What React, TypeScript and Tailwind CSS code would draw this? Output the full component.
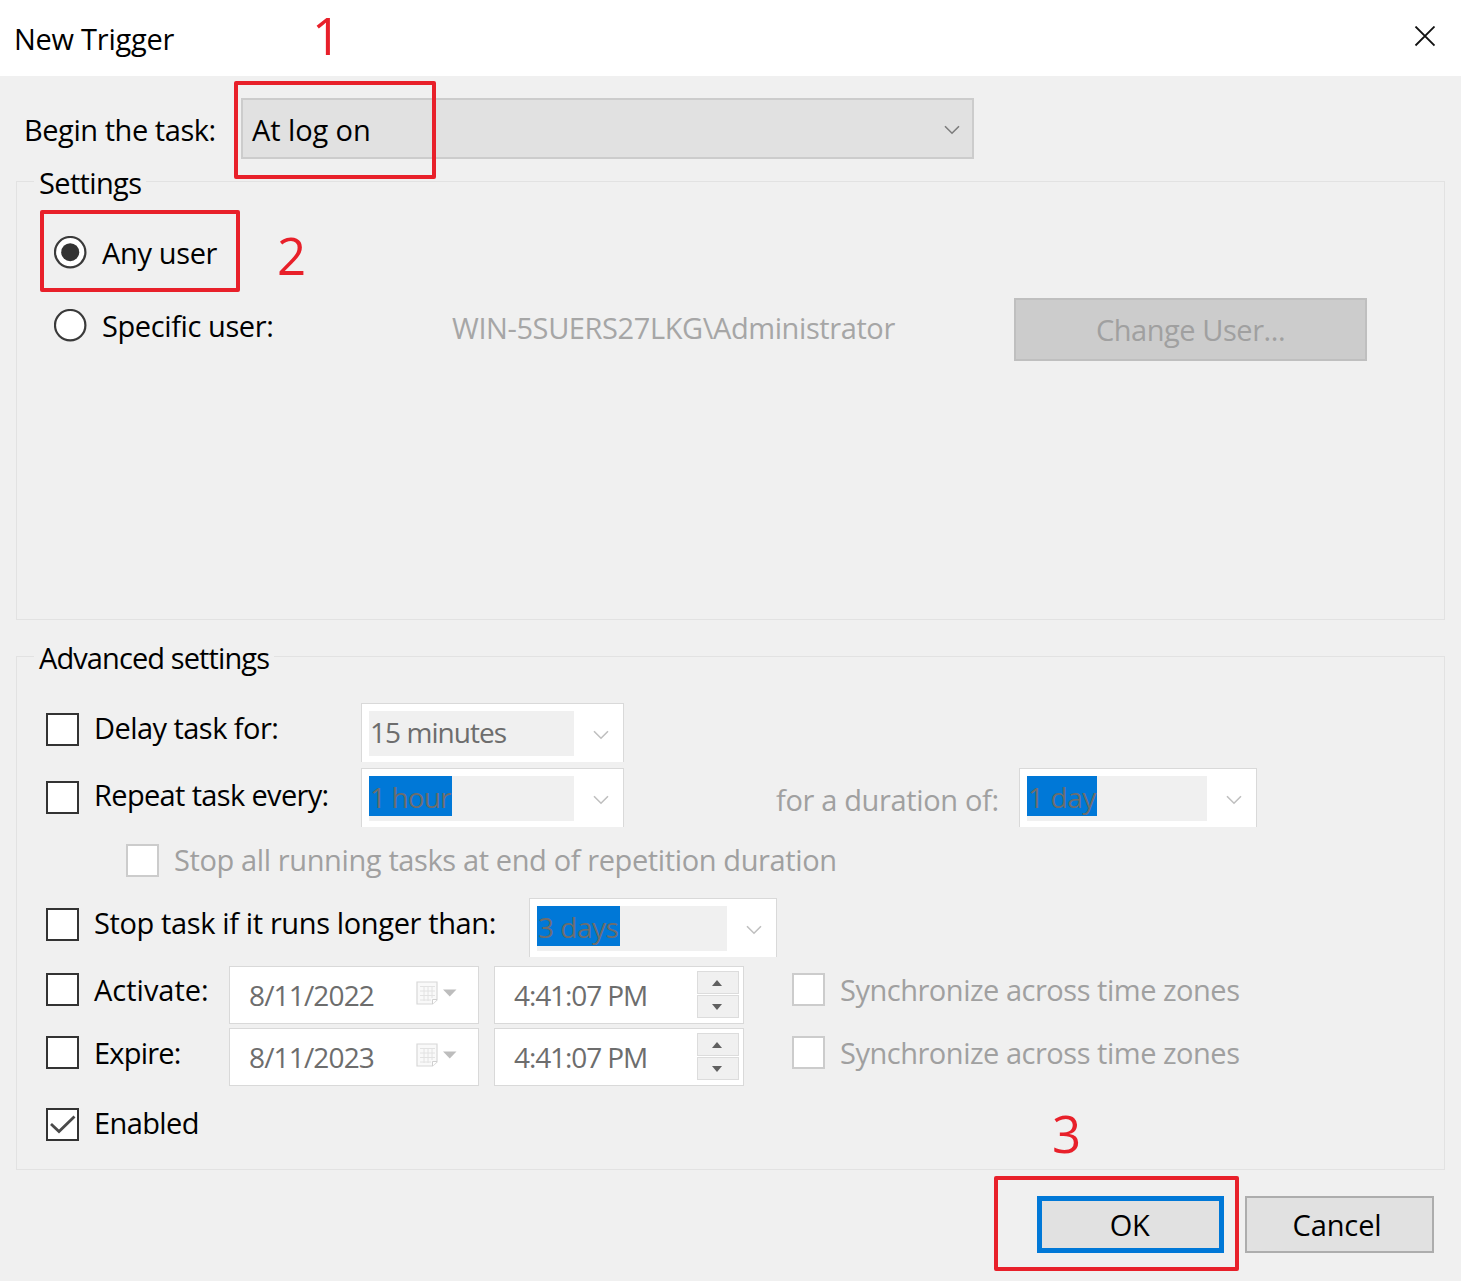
import React from "react";

function Chevron({ className }: { className: string }) {
  return (
    <svg width="16" height="10" viewBox="0 0 16 10" fill="none" stroke="currentColor" strokeWidth="1.6" className={className}>
      <path d="M1 1.2 L8 8.2 L15 1.2" />
    </svg>
  );
}

function Radio({ checked, className }: { checked?: boolean; className?: string }) {
  return (
    <svg width="33" height="33" viewBox="0 0 33 33" className={`shrink-0 ${className || ""}`}>
      <circle cx="16.2" cy="16.2" r="15.2" fill="#fff" stroke="#3a3a3a" strokeWidth="2.2" />
      {checked && <circle cx="16.2" cy="16.2" r="9" fill="#333" />}
    </svg>
  );
}

function Checkbox({ checked, disabled, className }: { checked?: boolean; disabled?: boolean; className?: string }) {
  return (
    <div className={`h-[33px] w-[33px] shrink-0 border-2 bg-white ${disabled ? "border-[#cccccc]" : "border-[#333333]"} ${className || ""}`}>
      {checked && (
        <svg width="29" height="29" viewBox="0 0 29 29" fill="none" stroke="#4a4a4a" strokeWidth="2.8">
          <path d="M3 14 L11 21.5 L26.5 6.5" />
        </svg>
      )}
    </div>
  );
}

function Combo({ value, selected, className, textClass }: { value: string; selected?: string; className: string; textClass: string }) {
  return (
    <div className={`flex h-[59px] shrink-0 border-x border-t border-[#d9d9d9] bg-white pt-[7px] pl-[7px] ${className}`}>
      <div className="h-[45px] flex-1 bg-[#f0f0f0] text-[28px] text-[#6d6d6d]">
        <div className={`h-10 pt-[6px] pl-px ${selected || ""}`}>
          <span className={textClass}>{value}</span>
        </div>
      </div>
      <div className="w-[49px] pt-[19px] pl-[19px]">
        <Chevron className="text-[#bfbfbf]" />
      </div>
    </div>
  );
}

function DateBox({ value }: { value: string }) {
  return (
    <div className="flex h-[58px] w-[250px] shrink-0 border border-[#d9d9d9] bg-white pt-[13px] pl-[19px] text-[#6d6d6d]">
      <span className="w-[167px] text-[28px] tracking-[-0.85px]">{value}</span>
      <svg width="42" height="26" viewBox="0 0 42 26" className="mt-px">
        <path d="M1 1 H21 V19 L16.5 23 H1 Z" fill="#f9f9f9" stroke="#d8d8d8" strokeWidth="1.2" />
        <path d="M4 5.5 H19 M4 10 H19 M4 14.5 H19 M4 19 H15 M8 5 V20 M12 5 V20 M16 5 V17" stroke="#e2e2e2" strokeWidth="1" />
        <path d="M16.5 23 V18.5 H21" fill="#fff" stroke="#cfcfcf" strokeWidth="1" />
        <path d="M27 8.5 H40.5 L33.75 15.5 Z" fill="#bdbdbd" />
      </svg>
    </div>
  );
}

function TimeBox({ value }: { value: string }) {
  return (
    <div className="ml-[15px] flex h-[58px] w-[250px] shrink-0 justify-between border border-[#d9d9d9] bg-white pr-1 pl-[19px] text-[#6d6d6d]">
      <span className="pt-[13px] text-[28px] tracking-[-1.1px]">{value}</span>
      <div className="mt-1 flex flex-col gap-px text-[#606060]">
        <div className="flex h-[23px] w-[42px] items-center justify-center border border-[#dcdcdc] bg-[#f0f0f0] pr-[2px]">
          <svg width="10" height="6" viewBox="0 0 10 6" fill="currentColor">
            <path d="M0 6 L5 0 L10 6 Z" />
          </svg>
        </div>
        <div className="flex h-[23px] w-[42px] items-center justify-center border border-[#dcdcdc] bg-[#f0f0f0] pr-[2px]">
          <svg width="10" height="6" viewBox="0 0 10 6" fill="currentColor">
            <path d="M0 0 L5 6 L10 0 Z" />
          </svg>
        </div>
      </div>
    </div>
  );
}

export default function App() {
  return (
    <div className="relative flex h-[1281px] w-[1461px] flex-col overflow-hidden bg-[#f0f0f0] font-['Open_Sans','Noto_Sans',sans-serif] text-[29px] leading-[30px] whitespace-nowrap text-black">
      <div className="flex h-[76px] shrink-0 justify-between bg-white pt-[24px] pr-[26px] pl-[14px]">
        <span className="tracking-[-0.25px]">New Trigger</span>
        <svg width="21" height="21" viewBox="0 0 21 21" stroke="#111" strokeWidth="1.8" className="mt-[2px]">
          <path d="M1.5 0.5 L20.5 19.5 M20.5 0.5 L1.5 19.5" />
        </svg>
      </div>

      <div className="flex h-[90px] shrink-0 pt-[22px] pl-[24px]">
        <span className="mt-[17px] w-[217px] tracking-[-0.45px]">Begin the task:</span>
        <div className="flex h-[61px] w-[733px] justify-between border-2 border-[#cccccc] bg-[#e1e1e1] pr-[12px] pl-[9px]">
          <span className="mt-[15px] tracking-[-0.1px]">At log on</span>
          <Chevron className="mt-[25px] text-[#7c7c7c]" />
        </div>
      </div>

      <fieldset className="mx-4 h-[454px] shrink-0 border border-[#e2e2e2] px-[17px]">
        <legend className="px-[5px] pt-[3px] leading-[27px] tracking-[-0.65px]">Settings</legend>
        <div className="mt-[40px] flex pl-[20px]">
          <Radio checked />
          <span className="mt-[2px] ml-[15px] h-[31px] tracking-[-0.35px]">Any user</span>
        </div>
        <div className="mt-[29px] flex pl-[20px]">
          <Radio className="mt-[11px]" />
          <span className="mt-[13px] ml-[15px] w-[350px] tracking-[-0.4px]">Specific user:</span>
          <span className="mt-[15px] w-[562px] tracking-[-0.4px] text-[#a6a6a6]">WIN-5SUERS27LKG\Administrator</span>
          <button className="h-[63px] w-[353px] border-2 border-[#bfbfbf] bg-[#cccccc] pt-px tracking-[-0.45px] text-[#a0a0a0]">Change User...</button>
        </div>
      </fieldset>

      <fieldset className="mx-4 mt-[21px] h-[529px] shrink-0 border border-[#e2e2e2] px-[17px]">
        <legend className="px-[5px] pt-[2px] leading-[29px] tracking-[-0.9px]">Advanced settings</legend>
        <div className="mt-[31px] flex pl-[12px]">
          <Checkbox className="mt-[10px]" />
          <span className="mt-[10px] ml-[15px] w-[267px] tracking-[-0.55px]">Delay task for:</span>
          <Combo value="15 minutes" className="w-[263px]" textClass="tracking-[-0.95px]" />
        </div>
        <div className="mt-[6px] flex pl-[12px]">
          <Checkbox className="mt-[13px]" />
          <span className="mt-[12px] ml-[15px] w-[267px] tracking-[-0.65px]">Repeat task every:</span>
          <Combo value="1 hour" className="w-[263px]" selected="w-[83px] bg-[#0078d7]" textClass="tracking-[-0.9px]" />
          <span className="mt-[17px] ml-[152px] w-[243px] tracking-[-0.35px] text-[#a0a0a0]">for a duration of:</span>
          <Combo value="1 day" className="w-[238px]" selected="w-[70px] bg-[#0078d7]" textClass="tracking-[-0.4px]" />
        </div>
        <div className="mt-[17px] flex pl-[92px]">
          <Checkbox disabled />
          <span className="mt-px ml-[15px] tracking-[-0.38px] text-[#a0a0a0]">Stop all running tasks at end of repetition duration</span>
        </div>
        <div className="mt-[21px] flex pl-[12px]">
          <Checkbox className="mt-[10px]" />
          <span className="mt-[10px] ml-[15px] w-[435px] tracking-[-0.37px]">Stop task if it runs longer than:</span>
          <Combo value="3 days" className="w-[248px]" selected="w-[83px] bg-[#0078d7]" textClass="tracking-[-0.5px]" />
        </div>
        <div className="mt-[9px] flex pl-[12px]">
          <Checkbox className="mt-[7px]" />
          <span className="mt-[9px] ml-[15px] w-[135px]">Activate:</span>
          <DateBox value="8/11/2022" />
          <TimeBox value="4:41:07 PM" />
          <Checkbox disabled className="mt-[7px] ml-[48px]" />
          <span className="mt-[9px] ml-[15px] tracking-[-0.48px] text-[#a0a0a0]">Synchronize across time zones</span>
        </div>
        <div className="mt-[4px] flex pl-[12px]">
          <Checkbox className="mt-[8px]" />
          <span className="mt-[10px] ml-[15px] w-[135px] tracking-[-0.8px]">Expire:</span>
          <DateBox value="8/11/2023" />
          <TimeBox value="4:41:07 PM" />
          <Checkbox disabled className="mt-[8px] ml-[48px]" />
          <span className="mt-[10px] ml-[15px] tracking-[-0.48px] text-[#a0a0a0]">Synchronize across time zones</span>
        </div>
        <div className="mt-[22px] flex pl-[12px]">
          <Checkbox checked />
          <span className="ml-[15px] tracking-[-0.6px]">Enabled</span>
        </div>
      </fieldset>

      <div className="mt-[26px] flex justify-end gap-[21px] pr-[27px]">
        <button className="h-[57px] w-[187px] border-5 border-[#0078d7] bg-[#e1e1e1] pr-[2px] tracking-[-0.5px]">OK</button>
        <button className="h-[57px] w-[189px] border-2 border-[#adadad] bg-[#e1e1e1] pr-[5px] tracking-[-0.1px]">Cancel</button>
      </div>

      {/* step markers drawn over the dialog */}
      <div className="absolute top-[81px] left-[234px] h-[98px] w-[202px] rounded-xs border-4 border-[#e8202a]" />
      <div className="absolute top-[210px] left-[40px] h-[82px] w-[200px] rounded-xs border-4 border-[#e8202a]" />
      <div className="absolute top-[1176px] left-[994px] h-[95px] w-[245px] rounded-xs border-4 border-[#e8202a]" />
      <span className="absolute top-[9px] left-[312px] text-[51px] leading-[52px] text-[#e8202a]">1</span>
      <span className="absolute top-[229px] left-[277px] text-[51px] leading-[52px] text-[#e8202a]">2</span>
      <span className="absolute top-[1107px] left-[1052px] text-[51px] leading-[52px] text-[#e8202a]">3</span>
    </div>
  );
}
